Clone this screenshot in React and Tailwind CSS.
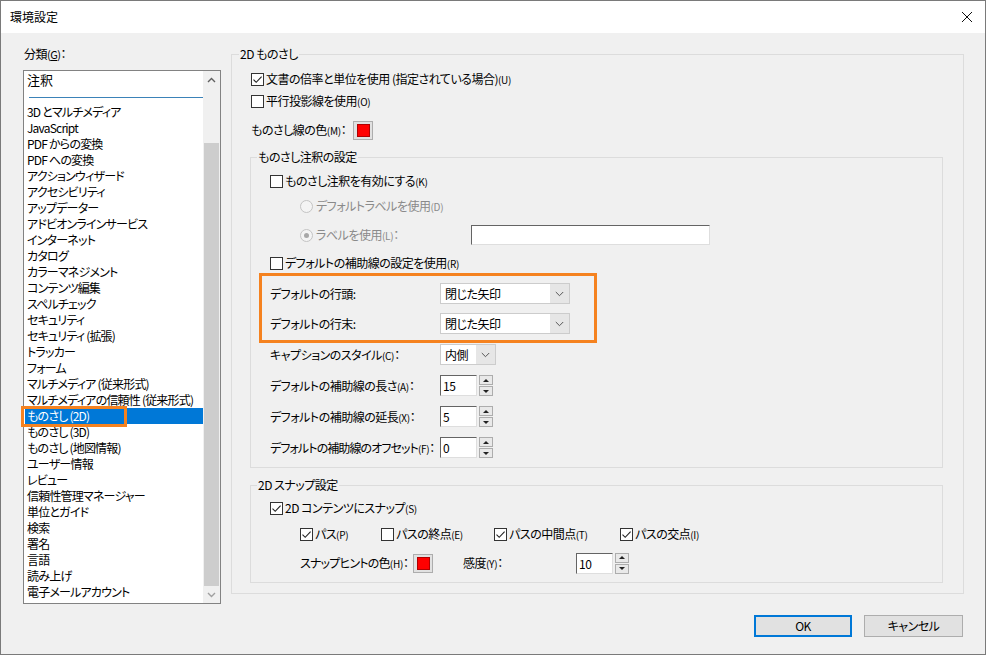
import React from 'react'

const items = [
  '3D とマルチメディア', 'JavaScript', 'PDF からの変換', 'PDF への変換', 'アクションウィザード',
  'アクセシビリティ', 'アップデーター', 'アドビオンラインサービス', 'インターネット', 'カタログ',
  'カラーマネジメント', 'コンテンツ編集', 'スペルチェック', 'セキュリティ', 'セキュリティ (拡張)',
  'トラッカー', 'フォーム', 'マルチメディア (従来形式)', 'マルチメディアの信頼性 (従来形式)', 'ものさし (2D)',
  'ものさし (3D)', 'ものさし (地図情報)', 'ユーザー情報', 'レビュー', '信頼性管理マネージャー',
  '単位とガイド', '検索', '署名', '言語', '読み上げ', '電子メールアカウント',
]

const Acc = ({k}) => <span className="text-[10px] tracking-[-0.3px]">({k})</span>

const CheckBox = ({checked}) => (
  <span className="w-[13px] h-[13px] border border-[#333333] bg-white flex items-center justify-center shrink-0">
    {checked && (
      <svg width="11" height="11" viewBox="0 0 11 11">
        <path d="M1.5 5.6 L4.2 8.3 L9.6 2.6" fill="none" stroke="#222" strokeWidth="1.1" />
      </svg>
    )}
  </span>
)

const Radio = ({checked}) => (
  <span className="w-[13px] h-[13px] rounded-full border border-[#c4c4c4] bg-[#f4f4f4] flex items-center justify-center shrink-0">
    {checked && <span className="w-[5px] h-[5px] rounded-full bg-[#a8a8a8]" />}
  </span>
)

const Swatch = () => (
  <span className="w-[20px] h-[19px] border border-[#adadad] bg-[#e1e1e1] flex items-center justify-center shrink-0">
    <span className="w-[13px] h-[13px] bg-[#ff0000] border border-[#b00000]" />
  </span>
)

const Chevron = () => (
  <svg width="9" height="6" viewBox="0 0 9 6">
    <path d="M0.8 1 L4.5 4.7 L8.2 1" fill="none" stroke="#555" strokeWidth="1" />
  </svg>
)

const Select = ({value, className}) => (
  <div className={`h-[21px] border border-[#cccccc] bg-white flex ${className}`}>
    <span className="flex-1 pl-[4px] leading-[19px]">{value}</span>
    <span className="w-[19px] bg-[#e6e6e6] flex items-center justify-center">
      <Chevron />
    </span>
  </div>
)

const Spin = ({value}) => (
  <div className="flex items-center">
    <div className="h-[21px] w-[37px] bg-white border border-t-[#646464] border-l-[#646464] border-r-[#dedede] border-b-[#dedede] pl-[2px] leading-[19px]">
      {value}
    </div>
    <div className="ml-[2px] flex flex-col gap-[1px]">
      <span className="w-[14px] h-[10px] border border-[#adadad] bg-[#e9e9e9] flex items-center justify-center">
        <svg width="6" height="3" viewBox="0 0 6 3"><path d="M0 3 L3 0 L6 3 Z" fill="#222" /></svg>
      </span>
      <span className="w-[14px] h-[10px] border border-[#adadad] bg-[#e9e9e9] flex items-center justify-center">
        <svg width="6" height="3" viewBox="0 0 6 3"><path d="M0 0 L6 0 L3 3 Z" fill="#222" /></svg>
      </span>
    </div>
  </div>
)

const Check = ({checked, children, className = ''}) => (
  <div className={`h-[20px] flex items-center gap-[2px] ${className}`}>
    <CheckBox checked={checked} />
    <span className="leading-[16px] whitespace-nowrap">{children}</span>
  </div>
)

const ScrollArrow = ({up}) => (
  <div className="h-[17px] flex items-center justify-center">
    <svg width="9" height="6" viewBox="0 0 9 6">
      <path d={up ? 'M1 5 L4.5 1.5 L8 5' : 'M1 1 L4.5 4.5 L8 1'} fill="none" stroke={up ? '#606060' : '#a0a0a0'} strokeWidth="1.4" />
    </svg>
  </div>
)

export default function App() {
  return (
    <div className="w-[986px] h-[655px] bg-[#f0f0f0] border border-[#7a7a7a] flex flex-col overflow-hidden text-[12px] text-black tracking-[-0.5px] [font-family:'Noto_Sans_CJK_JP','Noto_Sans',sans-serif] [font-feature-settings:'palt']">
      {/* title bar */}
      <div className="h-[32px] shrink-0 bg-white flex items-center justify-between pl-[9px] pr-[12px]">
        <span className="text-[12px] leading-[16px] tracking-normal">環境設定</span>
        <svg width="12" height="12" viewBox="0 0 12 12">
          <path d="M1 1 L11 11 M11 1 L1 11" stroke="#111" strokeWidth="1" />
        </svg>
      </div>

      <div className="flex h-[571px] shrink-0">
        {/* category list */}
        <div className="ml-[22px] mt-[13px] w-[198px]">
          <div className="h-[16px] leading-[16px] pl-[1px]">
            分類<span className="text-[11px]">(<span className="underline">G</span>)</span>：
          </div>
          <div className="mt-[8px] h-[534px] border border-[#828282] bg-white flex">
            <div className="flex-1 min-w-0 tracking-[-0.8px]">
              <div className="h-[33px] pt-[1px]">
                <div className="h-[16px] leading-[16px] pl-[3px] text-[13px] tracking-normal">注釈</div>
                <div className="mt-[9px] ml-[5px] h-[1px] bg-[#3b82b8]" />
              </div>
              {items.map((it, i) =>
                it === 'ものさし (2D)' ? (
                  <div key={i} className="relative h-[16px] ml-[1px] bg-[#0078d7] text-white leading-[16px] pl-[2px] whitespace-nowrap">
                    {it}
                    <span className="absolute left-[-4px] top-[-2px] w-[106px] h-[21px] border-[3px] border-[#f5821f]" />
                  </div>
                ) : (
                  <div key={i} className="h-[16px] leading-[16px] pl-[3px] whitespace-nowrap overflow-hidden">{it}</div>
                )
              )}
            </div>
            <div className="w-[17px] shrink-0 bg-[#f0f0f0] flex flex-col">
              <ScrollArrow up />
              <div className="flex-1 pt-[55px] px-[1px] flex flex-col">
                <div className="flex-1 bg-[#cdcdcd]" />
              </div>
              <ScrollArrow />
            </div>
          </div>
        </div>

        {/* settings */}
        <fieldset className="ml-[10px] mt-[13px] w-[733px] self-start border border-[#dcdcdc]">
          <legend className="ml-[7px] px-[1px] leading-[16px]">2D ものさし</legend>
          <div className="pl-[18px] pr-[20px] pb-[10px]">
            <Check checked className="mt-[6px] h-[22px] ml-[1px]">
              文書の倍率と単位を使用 (指定されている場合)<Acc k="U" />
            </Check>
            <Check className="h-[22px] ml-[1px]">
              平行投影線を使用<Acc k="O" />
            </Check>
            <div className="mt-[8px] h-[20px] flex items-center ml-[1px]">
              <span className="w-[102px] whitespace-nowrap">ものさし線の色<Acc k="M" />：</span>
              <Swatch />
            </div>

            <fieldset className="mt-[9px] border border-[#dcdcdc]">
              <legend className="ml-[6px] px-[1px] leading-[16px]">ものさし注釈の設定</legend>
              <div className="pl-[19px] pb-[9px]">
                <Check className="mt-[6px]">
                  ものさし注釈を有効にする<Acc k="K" />
                </Check>
                <div className="mt-[5px] h-[20px] pl-[30px] flex items-center gap-[3px] text-[#8a8a8a]">
                  <Radio />
                  <span>デフォルトラベルを使用<Acc k="D" /></span>
                </div>
                <div className="mt-[9px] h-[20px] pl-[30px] flex items-center text-[#8a8a8a]">
                  <Radio checked />
                  <span className="ml-[3px] w-[155px]">ラベルを使用<Acc k="L" />：</span>
                  <div className="h-[20px] w-[239px] bg-white border border-t-[#646464] border-l-[#646464] border-r-[#dedede] border-b-[#dedede]" />
                </div>
                <Check className="mt-[8px]">
                  デフォルトの補助線の設定を使用<Acc k="R" />
                </Check>

                <div className="ml-[-11px] w-[338px] border-[3px] border-[#f5821f] pl-[8px] pt-[7px] pb-[6px]">
                  <div className="h-[21px] flex items-center">
                    <span className="w-[170px]">デフォルトの行頭:</span>
                    <Select value="閉じた矢印" className="w-[130px]" />
                  </div>
                  <div className="mt-[9px] h-[21px] flex items-center">
                    <span className="w-[170px]">デフォルトの行末:</span>
                    <Select value="閉じた矢印" className="w-[130px]" />
                  </div>
                </div>

                <div className="mt-[1px] h-[21px] flex items-center">
                  <span className="w-[170px]">キャプションのスタイル<Acc k="C" />：</span>
                  <Select value="内側" className="w-[56px]" />
                </div>
                <div className="mt-[10px] h-[21px] flex items-center">
                  <span className="w-[170px]">デフォルトの補助線の長さ<Acc k="A" />：</span>
                  <Spin value="15" />
                </div>
                <div className="mt-[10px] h-[21px] flex items-center">
                  <span className="w-[170px]">デフォルトの補助線の延長<Acc k="X" />：</span>
                  <Spin value="5" />
                </div>
                <div className="mt-[10px] h-[21px] flex items-center">
                  <span className="w-[170px] shrink-0 whitespace-nowrap tracking-[-0.9px]">デフォルトの補助線のオフセット<Acc k="F" />：</span>
                  <Spin value="0" />
                </div>
              </div>
            </fieldset>

            <fieldset className="mt-[9px] border border-[#dcdcdc]">
              <legend className="ml-[6px] px-[1px] leading-[16px]">2D スナップ設定</legend>
              <div className="pl-[19px] pb-[9px]">
                <Check checked className="mt-[5px]">
                  2D コンテンツにスナップ<Acc k="S" />
                </Check>
                <div className="mt-[6px] pl-[30px] flex">
                  <Check checked className="w-[81px]">パス<Acc k="P" /></Check>
                  <Check className="w-[113px]">パスの終点<Acc k="E" /></Check>
                  <Check checked className="w-[126px]">パスの中間点<Acc k="T" /></Check>
                  <Check checked>パスの交点<Acc k="I" /></Check>
                </div>
                <div className="mt-[9px] h-[20px] pl-[30px] flex items-center">
                  <span className="w-[113px] shrink-0 whitespace-nowrap tracking-[-0.8px]">スナップヒントの色<Acc k="H" />：</span>
                  <Swatch />
                  <span className="ml-[30px] w-[113px]">感度<Acc k="Y" />：</span>
                  <Spin value="10" />
                </div>
              </div>
            </fieldset>
          </div>
        </fieldset>
      </div>

      {/* footer buttons */}
      <div className="flex justify-end gap-[12px] pr-[22px] pt-[11px]">
        <button className="w-[98px] h-[22px] border-2 border-[#0078d7] bg-[#e1e1e1] flex items-center justify-center leading-[16px]">
          OK
        </button>
        <button className="w-[99px] h-[22px] border border-[#adadad] bg-[#e1e1e1] flex items-center justify-center leading-[16px]">
          キャンセル
        </button>
      </div>
    </div>
  )
}
